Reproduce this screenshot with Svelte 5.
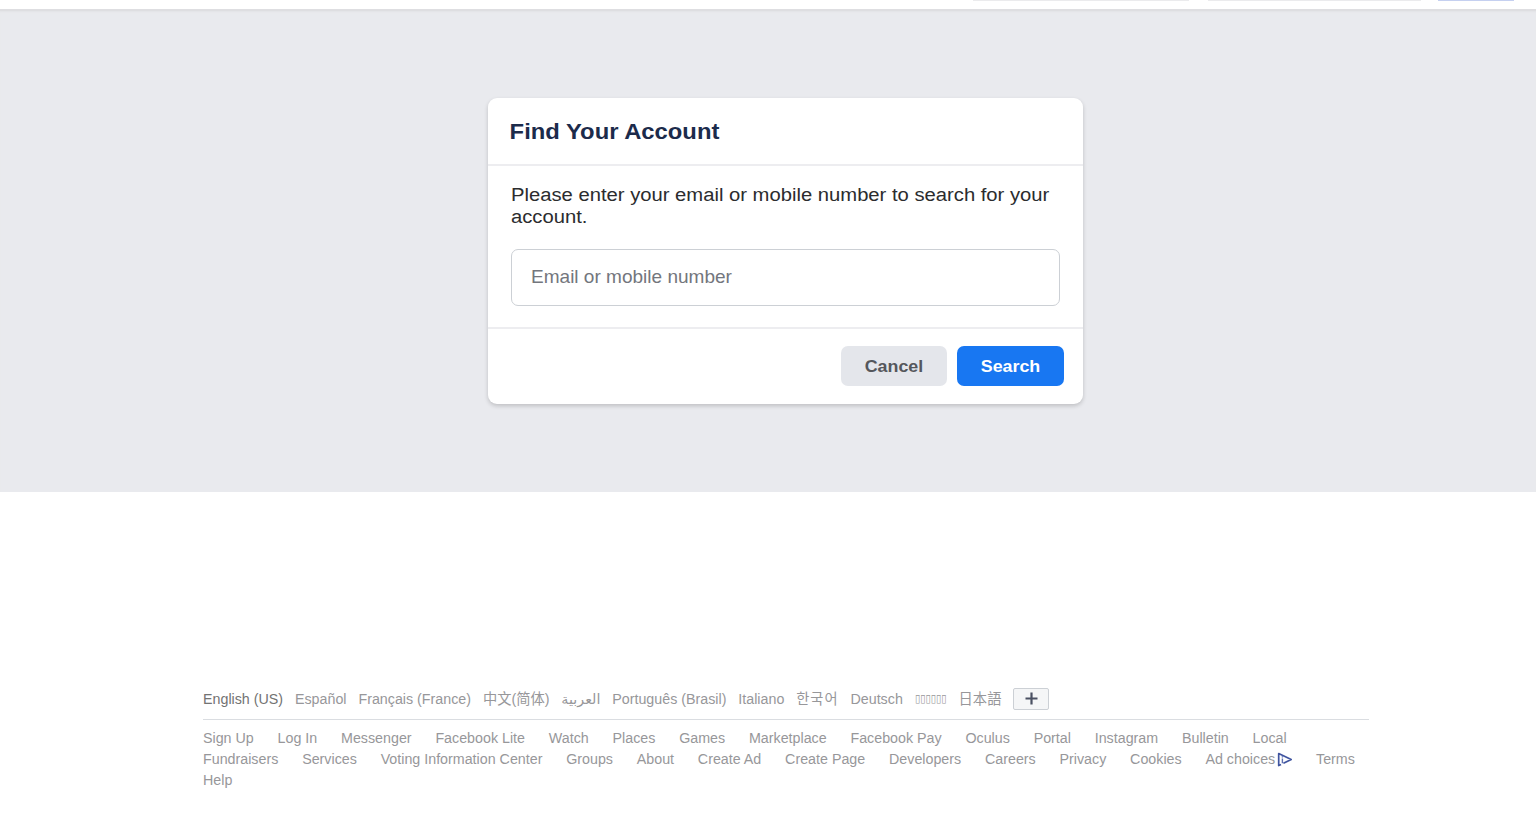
<script>
	let query = $state('');

	const languages = [
		{ name: 'Español' },
		{ name: 'Français (France)' },
		{ name: '中文(简体)' },
		{ name: 'العربية' },
		{ name: 'Português (Brasil)' },
		{ name: 'Italiano' },
		{ name: '한국어', style: 'korean' },
		{ name: 'Deutsch' },
		{ name: '▯▯▯▯▯▯', style: 'boxes' },
		{ name: '日本語' }
	];

	const linkRows = [
		['Sign Up', 'Log In', 'Messenger', 'Facebook Lite', 'Watch', 'Places', 'Games', 'Marketplace', 'Facebook Pay', 'Oculus', 'Portal', 'Instagram', 'Bulletin', 'Local'],
		['Fundraisers', 'Services', 'Voting Information Center', 'Groups', 'About', 'Create Ad', 'Create Page', 'Developers', 'Careers', 'Privacy', 'Cookies', 'Ad choices', 'Terms'],
		['Help']
	];
</script>

<div class="page">
	<header class="topbar">
		<div class="field-edge"></div>
		<div class="field-edge second"></div>
		<div class="login-edge"></div>
	</header>

	<main class="content">
		<form class="card" onsubmit={(e) => e.preventDefault()}>
			<div class="card-header">
				<h2>Find Your Account</h2>
			</div>
			<div class="card-body">
				<p>Please enter your email or mobile number to search for your account.</p>
				<input type="text" placeholder="Email or mobile number" bind:value={query} />
			</div>
			<div class="card-footer">
				<button type="button" class="cancel"><span>Cancel</span></button>
				<button type="submit" class="search"><span>Search</span></button>
			</div>
		</form>
	</main>

	<footer class="footer">
		<div class="languages">
			<span class="current">English (US)</span>
			{#each languages as language}
				<span class={language.style}>{language.name}</span>
			{/each}
			<button class="more" aria-label="Show more languages">
				<svg width="13" height="13" viewBox="0 0 13 13">
					<path d="M6.5 0.5v12M0.5 6.5h12" stroke="#4b5163" stroke-width="2.2" />
				</svg>
			</button>
		</div>
		<nav class="links">
			{#each linkRows as row}
				<div class="link-row">
					{#each row as link}
						<span class="link">
							{link}{#if link === 'Ad choices'}<svg class="adchoices" width="17" height="15" viewBox="0 0 17 15">
								<path d="M6 12.4L3.7 13.6V1.6L16.2 7.6L8.4 11.3" fill="none" stroke="#4055a0" stroke-width="1.7" stroke-linejoin="round" />
								<path d="M7.4 4.2v1.3M7.4 6.4v4.8" fill="none" stroke="#5c6eb0" stroke-width="1.4" />
							</svg>{/if}
						</span>
					{/each}
				</div>
			{/each}
		</nav>
	</footer>
</div>

<style>
	:global(body) {
		margin: 0;
		background: #fff;
		overflow: hidden;
	}

	.page {
		height: 816px;
		font-family: 'Liberation Sans', 'Noto Sans CJK SC', 'DejaVu Sans', sans-serif;
	}

	.topbar {
		height: 9px;
		display: flex;
		justify-content: flex-end;
		padding-right: 22px;
		background: #fff;
	}

	.field-edge {
		width: 216px;
		height: 1px;
		margin-right: 19px;
		background: #ebebed;
	}

	.field-edge.second {
		width: 213px;
		margin-right: 17px;
	}

	.login-edge {
		width: 76px;
		height: 1px;
		background: #c5d0f0;
	}

	.content {
		box-sizing: border-box;
		height: 483px;
		padding: 89px 0 0 488px;
		background: #e9eaee;
		box-shadow: inset 0 2px 0 #dedee1, inset 0 4px 2px -1px #e3e3e6;
	}

	.card {
		width: 595px;
		height: 306px;
		display: flex;
		flex-direction: column;
		background: #fff;
		border-radius: 9px;
		box-shadow: 0 2px 4px rgba(0, 0, 0, 0.18);
	}

	.card-header {
		box-sizing: border-box;
		height: 68px;
		padding: 0 21.6px;
		border-bottom: 2px solid #ededf0;
	}

	h2 {
		margin: 0;
		color: #1c2b4b;
		font-size: 23.8px;
		line-height: 66px;
		transform: scaleY(0.94);
	}

	.card-body {
		box-sizing: border-box;
		height: 163px;
		padding: 18px 23px 0;
		border-bottom: 2px solid #ededf0;
	}

	.card-body p {
		margin: 0 0 21px;
		color: #2b2c2e;
		font-size: 20.23px;
		line-height: 23.4px;
		height: 44px;
		transform: scaleY(0.94);
		transform-origin: 0 0;
	}

	input {
		box-sizing: border-box;
		width: 549px;
		height: 57px;
		padding: 0 19px 1px;
		border: 1px solid #ccd0d5;
		border-radius: 7px;
		color: #1d2129;
		font-family: inherit;
		font-size: 19.04px;
		outline: none;
	}

	input::placeholder {
		color: #73767d;
	}

	.card-footer {
		display: flex;
		justify-content: flex-end;
		gap: 10px;
		padding: 17px 19px 0 0;
	}

	.card-footer button {
		width: 107px;
		height: 40px;
		padding: 0;
		border: none;
		border-radius: 7px;
		font-family: inherit;
		font-size: 17.85px;
		font-weight: bold;
	}

	.card-footer button span {
		display: block;
		transform: scaleY(0.93);
	}

	.card-footer .cancel {
		width: 106px;
		background: #e4e6eb;
		color: #55575c;
	}

	.card-footer .search {
		background: #1877f2;
		color: #fff;
	}

	.footer {
		width: 1166px;
		margin-left: 203px;
		padding-top: 195px;
		color: #97979a;
		font-size: 14.28px;
	}

	.languages {
		box-sizing: border-box;
		height: 33px;
		display: flex;
		gap: 11.9px;
		border-bottom: 1px solid #dadde1;
		line-height: 24px;
		white-space: nowrap;
	}

	.current {
		color: #737373;
	}

	.korean {
		letter-spacing: 1px;
	}

	.boxes {
		width: 32px;
		font-family: 'DejaVu Sans', sans-serif;
		font-size: 10.8px;
		letter-spacing: -0.1px;
		display: flex;
		transform: scaleX(0.9);
		transform-origin: 0 0;
	}

	.more {
		box-sizing: border-box;
		width: 36px;
		height: 22px;
		display: flex;
		align-items: center;
		justify-content: center;
		margin-top: 1px;
		padding: 0 0 1px;
		background: #f5f6f7;
		border: 1px solid #ccd0d5;
		border-radius: 2px;
	}

	.links {
		padding-top: 8px;
	}

	.link-row {
		height: 21px;
		display: flex;
		gap: 23.8px;
		line-height: 21px;
		white-space: nowrap;
	}

	.adchoices {
		vertical-align: -3px;
	}
</style>
